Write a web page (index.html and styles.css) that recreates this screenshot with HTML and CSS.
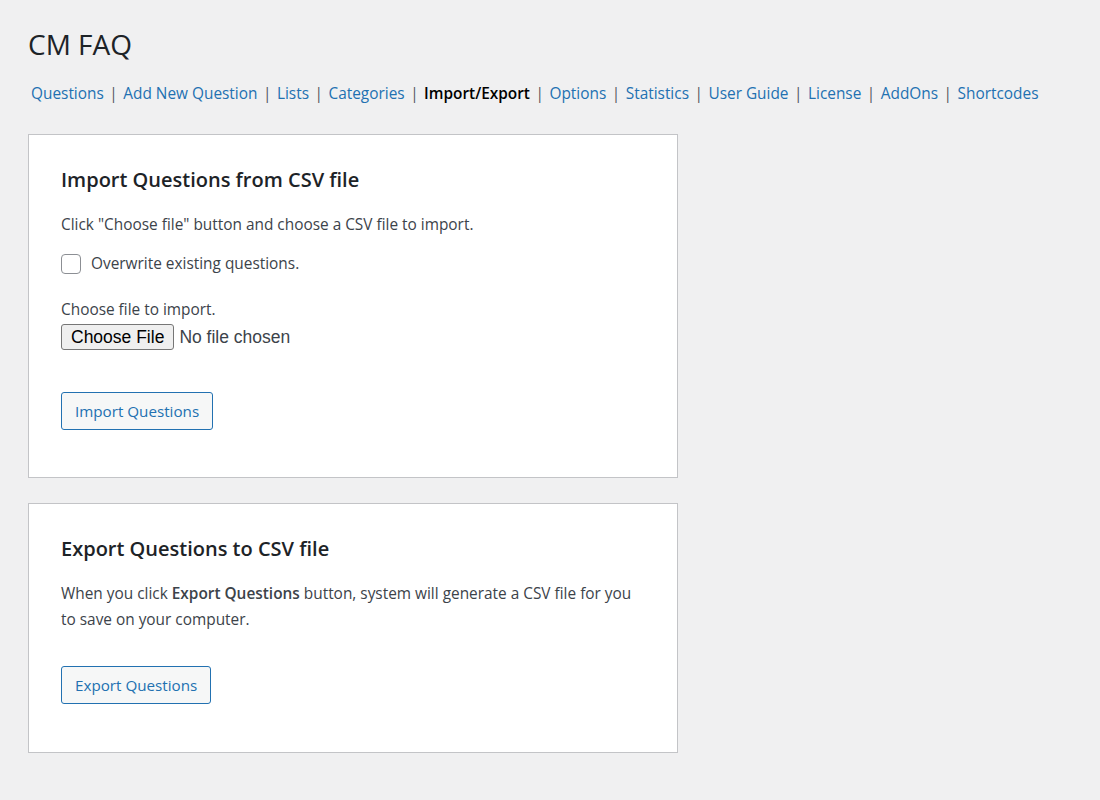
FILE: index.html
```html
<!DOCTYPE html>
<html>
<head>
<meta charset="utf-8">
<link rel="stylesheet" href="styles.css">
</head>
<body>
<div class="wrap">
  <h1 class="title">CM FAQ</h1>
  <nav class="subnav"><a href="#">Questions</a><span class="sep">|</span><a href="#">Add New Question</a><span class="sep">|</span><a href="#">Lists</a><span class="sep">|</span><a href="#">Categories</a><span class="sep">|</span><a href="#" class="current">Import/Export</a><span class="sep">|</span><a href="#">Options</a><span class="sep">|</span><a href="#">Statistics</a><span class="sep">|</span><a href="#">User Guide</a><span class="sep">|</span><a href="#">License</a><span class="sep">|</span><a href="#">AddOns</a><span class="sep">|</span><a href="#">Shortcodes</a></nav>

  <section class="card card-import">
    <h2 class="card-title">Import Questions from CSV file</h2>
    <p class="text intro">Click "Choose file" button and choose a CSV file to import.</p>
    <label class="check-row"><input type="checkbox" class="check"><span>Overwrite existing questions.</span></label>
    <p class="text label-file">Choose file to import.</p>
    <input type="file" class="file">
    <div class="actions"><button class="btn">Import Questions</button></div>
  </section>

  <section class="card card-export">
    <h2 class="card-title">Export Questions to CSV file</h2>
    <p class="text para">When you click <strong>Export Questions</strong> button, system will generate a CSV file for you to save on your computer.</p>
    <div class="actions"><button class="btn">Export Questions</button></div>
  </section>
</div>
</body>
</html>
```

FILE: styles.css
```css
html, body {
  margin: 0;
  padding: 0;
  background: #f0f0f1;
}
body {
  font-family: "Open Sans", "Noto Sans", sans-serif;
  font-size: 15.4px;
  color: #3c434a;
}
.wrap {
  padding: 0 28px;
}
.title {
  margin: 0;
  padding-top: 26px;
  font-size: 28px;
  font-weight: 400;
  line-height: 36px;
  color: #1d2327;
}
.subnav {
  margin-top: 21px;
  font-size: 15.4px;
  line-height: 22px;
  padding-left: 3px;
  color: #50575e;
}
.subnav a {
  color: #2271b1;
  text-decoration: none;
}
.subnav a.current {
  color: #000;
  font-weight: 600;
}
.sep {
  margin: 0 5.5px;
  color: #50575e;
}
.card {
  background: #fff;
  border: 1px solid #c3c4c7;
  width: 584px;
  padding: 31px 32px 47px;
  box-sizing: content-box;
  margin-top: 29px;
}
.card-export {
  margin-top: 25px;
  padding-bottom: 48px;
}
.card-title {
  margin: 0;
  font-size: 20px;
  font-weight: 600;
  line-height: 28px;
  color: #1d2327;
}
.text {
  margin: 0;
  line-height: 22px;
}
.intro {
  margin-top: 20px;
}
.para {
  line-height: 26px;
  margin-top: 18px;
}
.para strong {
  font-weight: 600;
}
.check-row {
  display: flex;
  align-items: center;
  margin-top: 18px;
  gap: 10px;
  line-height: 20px;
}
.check {
  appearance: none;
  -webkit-appearance: none;
  margin: 0;
  width: 20px;
  height: 20px;
  border: 1px solid #8c8f94;
  border-radius: 4px;
  background: #fff;
}
.label-file {
  margin-top: 25px;
}
.file {
  display: block;
  margin-top: 3px;
  font-family: "Liberation Sans", Arial, sans-serif;
  font-size: 17.5px;
  color: #3c434a;
}
.file::file-selector-button {
  font-family: "Liberation Sans", Arial, sans-serif;
  font-size: 17.5px;
  line-height: 20px;
  color: #000;
  background: #efefef;
  border: 1px solid #767676;
  border-radius: 3px;
  padding: 2px 9px;
  margin-right: 5px;
}
.actions {
  margin-top: 42px;
}
.card-export .actions {
  margin-top: 33px;
}
.btn {
  display: block;
  font-family: inherit;
  font-size: 15.2px;
  color: #2271b1;
  background: #f6f7f7;
  border: 1px solid #2271b1;
  border-radius: 3px;
  height: 38px;
  padding: 0 13px;
}
```
